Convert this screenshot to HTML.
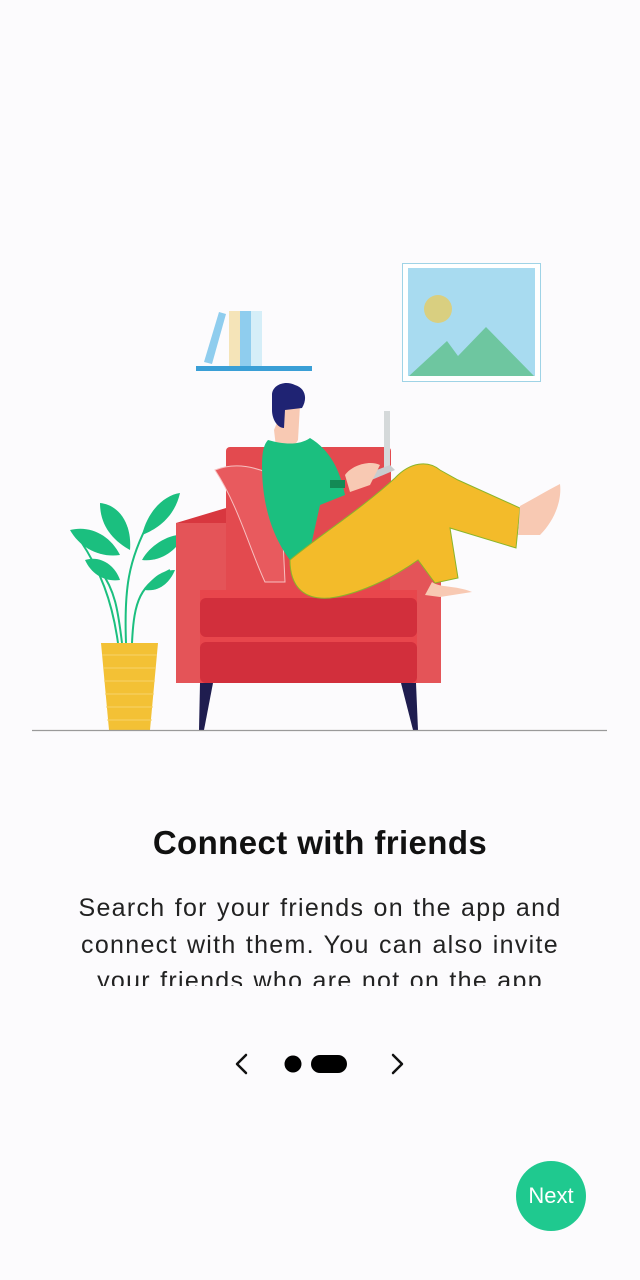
<!DOCTYPE html>
<html><head><meta charset="utf-8"><style>
html,body{margin:0;padding:0;width:640px;height:1280px;background:#fcfbfd;overflow:hidden;font-family:"Liberation Sans",sans-serif}
svg.ill{position:absolute;left:0;top:0}
h1{position:absolute;left:0;width:640px;top:824px;margin:0;text-align:center;font-size:33px;font-weight:bold;color:#111;letter-spacing:0.4px}
.body{position:absolute;left:60px;width:520px;top:890px;height:96px;overflow:hidden;text-align:center;font-size:25px;line-height:36.5px;color:#222;letter-spacing:1.3px;word-spacing:1px}
.next{position:absolute;left:516px;top:1161px;width:70px;height:70px;border-radius:50%;background:#1fc98f;color:#fff;font-size:22px;line-height:70px;text-align:center}
</style></head><body>
<svg class="ill" width="640" height="1280" viewBox="0 0 640 1280">
<rect x="402.5" y="263.5" width="138" height="118" fill="#fff" stroke="#9fd3e6" stroke-width="1"/>
<rect x="408" y="268" width="127" height="108" fill="#a8dbf0"/>
<circle cx="438" cy="309" r="14" fill="#d9cf80"/>
<polygon points="409,376 447,341 458,356 486,327 534,376" fill="#6ec6a0"/>
<rect x="196" y="366" width="116" height="5" fill="#3a9fd6"/>
<polygon points="204,362 219,312 226,314 212,364" fill="#8fcdee"/>
<rect x="229" y="311" width="11" height="55" fill="#f5e4b8"/>
<rect x="240" y="311" width="11" height="55" fill="#8fcdee"/>
<rect x="251" y="311" width="11" height="55" fill="#d5eef8"/>
<g stroke="#1bbf7f" stroke-width="2" fill="none">
<path d="M118 643 C112 600 100 570 80 540"/><path d="M126 643 C124 590 128 560 150 520"/><path d="M132 643 C134 600 140 585 170 570"/><path d="M122 643 C118 610 115 590 100 570"/>
</g>
<g fill="#1bbf7f">
<path d="M70 530 C90 525 110 535 120 555 C100 558 80 548 70 530Z"/>
<path d="M100 503 C120 505 132 525 130 550 C112 540 100 525 100 503Z"/>
<path d="M180 493 C165 495 148 510 142 535 C160 528 175 515 180 493Z"/>
<path d="M185 535 C170 533 150 545 142 560 C160 562 175 552 185 535Z"/>
<path d="M85 560 C100 555 115 565 120 580 C105 582 92 575 85 560Z"/>
<path d="M175 570 C160 570 150 580 145 590 C160 592 170 582 175 570Z"/>
</g>
<polygon points="101,643 158,643 150,730 109,730" fill="#f3c135"/>
<g stroke="#f7d46a" stroke-width="1"><line x1="102" y1="655" x2="157" y2="655"/><line x1="103" y1="668" x2="156" y2="668"/><line x1="104" y1="681" x2="155" y2="681"/><line x1="105" y1="694" x2="154" y2="694"/><line x1="106" y1="707" x2="153" y2="707"/><line x1="107" y1="720" x2="152" y2="720"/></g>
<polygon points="200,683 213,683 204,730 199,730" fill="#1f1d4f"/>
<polygon points="401,683 416,683 418,730 413,730" fill="#1f1d4f"/>
<rect x="226" y="447" width="165" height="150" rx="4" fill="#e34a4f"/>
<rect x="176" y="523" width="50" height="160" fill="#e45458"/>
<polygon points="176,523 226,508 226,523" fill="#d8373f"/>
<rect x="390" y="515" width="51" height="168" fill="#e45458"/>
<rect x="200" y="590" width="217" height="93" fill="#e8464c"/>
<rect x="200" y="598" width="217" height="39" rx="6" fill="#d22f3c"/>
<rect x="200" y="642" width="217" height="41" rx="6" fill="#d22f3c"/>
<path d="M215 470 C235 462 255 466 280 478 L285 582 L265 582 C250 550 238 505 215 470Z" fill="#e85a5e" stroke="#f7c0c0" stroke-width="1"/>
<rect x="384" y="411" width="6" height="60" fill="#d5d9da"/>
<polygon points="350,480 390,465 395,470 355,487" fill="#c9cdcf"/>
<path d="M274 430 L276 447 L292 450 L298 440 L300 405 L282 410Z" fill="#f8c9b3"/>
<path d="M272 395 C272 385 285 380 295 385 C305 388 308 398 302 408 L285 410 L284 428 C278 428 272 420 272 410Z" fill="#1f2373"/>
<path d="M268 440 C285 445 300 445 310 438 C330 450 340 470 345 495 L320 505 L310 550 L290 560 C275 540 262 510 262 465 C262 452 264 444 268 440Z" fill="#1bbf7f"/>
<rect x="330" y="480" width="15" height="8" fill="#138a55"/>
<path d="M345 475 C352 465 370 460 380 465 L370 485 L350 492Z" fill="#f8c9b3"/>
<!-- pants -->
<path d="M290 560 C320 535 360 510 395 478 C410 462 428 460 440 470 L458 480 L520 508 L516 548 L450 528 L458 578 L435 583 L418 560 C390 580 355 595 330 598 C305 600 290 588 290 560Z" fill="#f3bb2a" stroke="#8ab52a" stroke-width="1"/>
<path d="M520 506 C535 498 548 490 560 484 C562 500 555 520 540 535 L518 535Z" fill="#f8c9b3"/>
<path d="M432 582 C440 588 455 585 472 592 L440 597 L425 595Z" fill="#f8c9b3"/>
<line x1="32" y1="730.5" x2="607" y2="730.5" stroke="#9a9a9a" stroke-width="1.2"/>
<polyline points="246,1055 237,1064 246,1073" fill="none" stroke="#111" stroke-width="2.5" stroke-linecap="round" stroke-linejoin="round"/>
<polyline points="393,1055 402,1064 393,1073" fill="none" stroke="#111" stroke-width="2.5" stroke-linecap="round" stroke-linejoin="round"/>
<circle cx="293" cy="1064" r="8.5" fill="#000"/>
<rect x="311" y="1055" width="36" height="18" rx="9" fill="#000"/>
</svg>
<h1>Connect with friends</h1>
<div class="body">Search for your friends on the app and<br>connect with them. You can also invite<br>your friends who are not on the app</div>
<div class="next">Next</div>
</body></html>
